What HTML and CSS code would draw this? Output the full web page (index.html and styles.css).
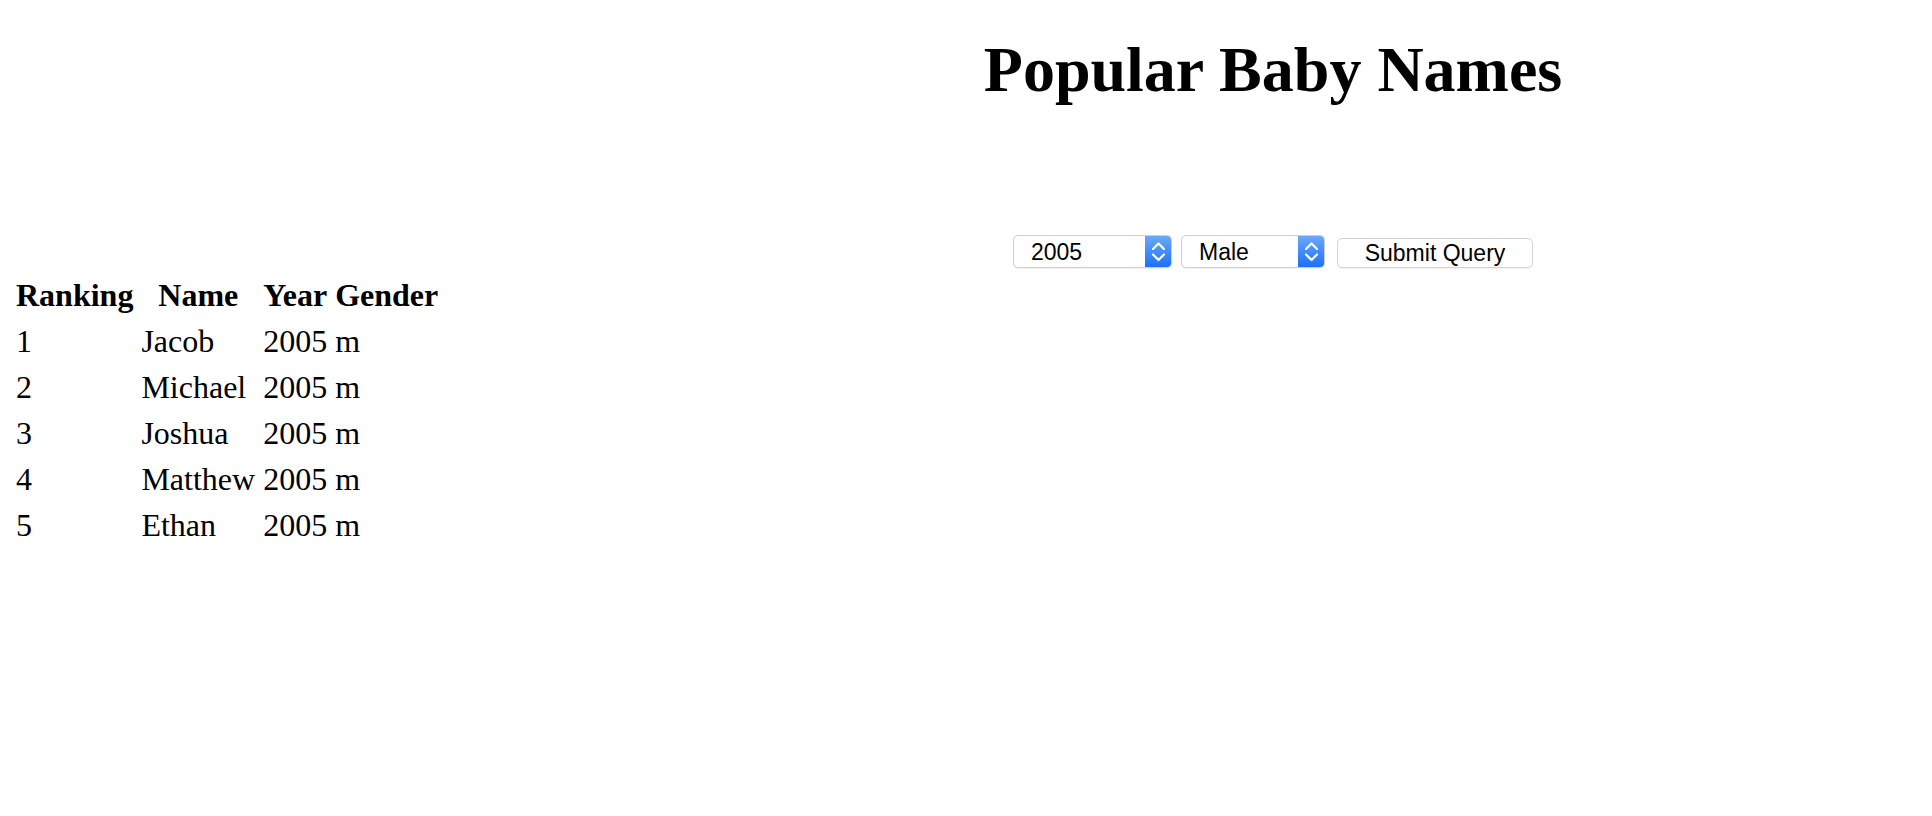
FILE: index.html
```html
<!DOCTYPE html>
<html lang="en">
<head>
<meta charset="utf-8">
<title>Popular Baby Names</title>
<link rel="stylesheet" href="styles.css">
</head>
<body>
<header class="top">
  <h1 class="title">Popular Baby Names</h1>
  <form class="query">
    <div class="select select-year">
      <select class="select-native" name="year">
        <option>2005</option>
      </select>
      <span class="select-arrows">
        <svg width="27" height="33" viewBox="0 0 27 33"><path d="M8 14 L13.5 8.5 L19 14" fill="none" stroke="#fff" stroke-width="2.2" stroke-linecap="round" stroke-linejoin="round"/><path d="M8 19.5 L13.5 25 L19 19.5" fill="none" stroke="#fff" stroke-width="2.2" stroke-linecap="round" stroke-linejoin="round"/></svg>
      </span>
    </div>
    <div class="select select-gender">
      <select class="select-native" name="gender">
        <option>Male</option>
      </select>
      <span class="select-arrows">
        <svg width="27" height="33" viewBox="0 0 27 33"><path d="M8 14 L13.5 8.5 L19 14" fill="none" stroke="#fff" stroke-width="2.2" stroke-linecap="round" stroke-linejoin="round"/><path d="M8 19.5 L13.5 25 L19 19.5" fill="none" stroke="#fff" stroke-width="2.2" stroke-linecap="round" stroke-linejoin="round"/></svg>
      </span>
    </div>
    <button class="submit" type="button">Submit Query</button>
  </form>
</header>
<main class="results">
  <table class="names">
    <thead>
      <tr><th>Ranking</th><th>Name</th><th>Year</th><th>Gender</th></tr>
    </thead>
    <tbody>
      <tr><td>1</td><td>Jacob</td><td>2005</td><td>m</td></tr>
      <tr><td>2</td><td>Michael</td><td>2005</td><td>m</td></tr>
      <tr><td>3</td><td>Joshua</td><td>2005</td><td>m</td></tr>
      <tr><td>4</td><td>Matthew</td><td>2005</td><td>m</td></tr>
      <tr><td>5</td><td>Ethan</td><td>2005</td><td>m</td></tr>
    </tbody>
  </table>
</main>
</body>
</html>
```

FILE: styles.css
```css
html, body {
  margin: 0;
  padding: 0;
  background: #fff;
  color: #000;
}

body {
  font-family: "Liberation Serif", "Times New Roman", serif;
}

.top {
  margin-left: 614px;
  padding-top: 33px;
  text-align: center;
}

.title {
  margin: 0;
  font-size: 64px;
  font-weight: bold;
  line-height: 73.5px;
}

.query {
  margin: 128px 0 0;
  display: flex;
  justify-content: center;
  align-items: flex-end;
  gap: 9px;
}

.select {
  display: flex;
  height: 33px;
  box-sizing: border-box;
  border: 1px solid #cfcfcf;
  border-radius: 5px;
  background: #fff;
  overflow: hidden;
  box-shadow: 0 1px 1px rgba(0, 0, 0, 0.06);
}

.select-year { width: 159px; }
.select-gender { width: 144px; }

.select-native {
  flex: 1;
  min-width: 0;
  -webkit-appearance: none;
  appearance: none;
  border: 0;
  outline: none;
  background: transparent;
  margin: 0;
  padding: 2px 0 0 17px;
  font-family: "Liberation Sans", Arial, sans-serif;
  font-size: 23px;
  color: #000;
  height: 31px;
  line-height: 29px;
  box-sizing: border-box;
}

.select-arrows {
  flex: none;
  width: 27px;
  height: 33px;
  margin: -1px -1px -1px 0;
  background: linear-gradient(#6eaafc, #1a6ef7);
  border-radius: 0 5px 5px 0;
  display: flex;
}

.select-arrows svg {
  display: block;
}

.submit {
  margin: 0 0 0 3px;
  width: 196px;
  height: 30px;
  box-sizing: border-box;
  border: 1px solid #d4d4d4;
  border-radius: 5px;
  background: #fff;
  padding: 1px 0 0;
  font-family: "Liberation Sans", Arial, sans-serif;
  font-size: 23px;
  line-height: 27px;
  color: #000;
  box-shadow: 0 1px 1px rgba(0, 0, 0, 0.05);
}

.results {
  padding: 2px 0 0 10px;
}

.names {
  border-collapse: separate;
  border-spacing: 4px;
  font-size: 32px;
  line-height: 38px;
}

.names th,
.names td {
  padding: 2px;
}

.names th {
  font-weight: bold;
  text-align: center;
}

.names td {
  text-align: left;
}
```
